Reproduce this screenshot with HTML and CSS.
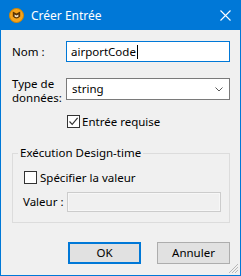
FILE: index.html
```html
<!DOCTYPE html>
<html lang="fr">
<head>
<meta charset="utf-8">
<link rel="stylesheet" href="styles.css">
</head>
<body>
<div class="win">
  <div class="titlebar">
    <svg class="appicon" width="15" height="15" viewBox="0 0 15 15">
      <circle cx="7.5" cy="7.5" r="7" fill="#f7a41c" stroke="#d38400" stroke-width="1"/>
      <path d="M3.8 3.6 L7.5 5.6 L11.2 3.6 L11.2 8.6 Q7.5 12.4 3.8 8.6 Z" fill="#5b3405"/>
      <path d="M5.6 6.6 L7.5 7.6 L9.4 6.6 L9.4 8.4 Q7.5 10 5.6 8.4 Z" fill="#f3e3c8"/>
    </svg>
    <span class="title">Créer Entrée</span>
    <svg class="close" width="11" height="11" viewBox="0 0 11 11">
      <path d="M0.5 0.5 L10.5 10.5 M10.5 0.5 L0.5 10.5" stroke="#ffffff" stroke-width="1.1" fill="none"/>
    </svg>
  </div>
  <div class="content">
    <div class="row row-nom">
      <span class="lbl">Nom :</span>
      <div class="edit focused"><span>airportCode</span><span class="caret"></span></div>
    </div>
    <div class="row row-type">
      <span class="lbl lbl2">Type de<br>données:</span>
      <div class="combo">
        <span>string</span>
        <svg class="chev" width="8" height="5" viewBox="0 0 8 5"><path d="M0.5 0.5 L4 4 L7.5 0.5" stroke="#5a5a5a" stroke-width="1" fill="none"/></svg>
      </div>
    </div>
    <div class="check-row check-req">
      <span class="cb"><svg width="11" height="11" viewBox="0 0 11 11"><path d="M1.5 5.5 L4.2 8.3 L9.6 1.8" stroke="#333333" stroke-width="1.2" fill="none"/></svg></span>
      <span>Entrée requise</span>
    </div>
    <fieldset class="group">
      <legend>Exécution Design-time</legend>
      <div class="check-row check-spec">
        <span class="cb"></span>
        <span>Spécifier la valeur</span>
      </div>
      <div class="row row-val">
        <span class="lbl">Valeur :</span>
        <div class="edit disabled"></div>
      </div>
    </fieldset>
    <div class="buttons">
      <button class="btn default">OK</button>
      <button class="btn">Annuler</button>
    </div>
  </div>
  <svg class="grip" width="10" height="10" viewBox="0 0 10 10">
    <g fill="#b8b8b8">
      <rect x="8" y="0" width="1" height="1"/><rect x="7" y="1" width="1" height="1"/><rect x="6" y="2" width="1" height="1"/><rect x="5" y="3" width="1" height="1"/><rect x="4" y="4" width="1" height="1"/><rect x="3" y="5" width="1" height="1"/><rect x="2" y="6" width="1" height="1"/><rect x="1" y="7" width="1" height="1"/><rect x="0" y="8" width="1" height="1"/>
      <rect x="8" y="3" width="1" height="1"/><rect x="7" y="4" width="1" height="1"/><rect x="6" y="5" width="1" height="1"/><rect x="5" y="6" width="1" height="1"/><rect x="4" y="7" width="1" height="1"/><rect x="3" y="8" width="1" height="1"/>
      <rect x="8" y="6" width="1" height="1"/><rect x="7" y="7" width="1" height="1"/><rect x="6" y="8" width="1" height="1"/>
    </g>
  </svg>
</div>
</body>
</html>
```

FILE: styles.css
```css
* { box-sizing: border-box; }
html, body { margin: 0; padding: 0; background: #f0f0f0; }
body {
  font-family: "Segoe UI", "Noto Sans", "Liberation Sans", sans-serif;
  font-size: 11.5px;
  color: #000;
}
.win {
  position: relative;
  width: 241px;
  height: 276px;
  border: 1px solid #0078d7;
  background: #f0f0f0;
  overflow: hidden;
}
.titlebar {
  height: 29px;
  background: #0078d7;
  display: flex;
  align-items: center;
  padding: 0 9px 0 8px;
  color: #fff;
}
.appicon { flex: none; }
.title {
  margin-left: 7px;
  font-size: 12px;
  flex: 1;
  line-height: 16px;
}
.close { flex: none; }
.content {
  padding: 11px 10px 0 11px;
}
.row {
  display: grid;
  grid-template-columns: 54px 164px;
}
.row-nom { height: 21px; align-items: center; }
.row-type { height: 22px; margin-top: 16px; align-items: start; }
.lbl { line-height: 14px; white-space: nowrap; }
.lbl2 { line-height: 14px; margin-top: -1px; }
.edit {
  height: 21px;
  background: #fff;
  border: 1px solid #7a7a7a;
  display: flex;
  align-items: center;
  padding-left: 4px;
  line-height: 14px;
}
.edit.focused { border-color: #0078d7; }
.caret {
  display: inline-block;
  width: 1px;
  height: 14px;
  background: #000;
  margin-left: 1px;
}
.combo {
  height: 22px;
  background: #fff;
  border: 1px solid #7a7a7a;
  display: flex;
  align-items: center;
  justify-content: space-between;
  padding: 0 6px 0 5px;
  line-height: 14px;
}
.chev { margin-top: 1px; }
.check-row {
  display: flex;
  align-items: center;
  gap: 2px;
  height: 13px;
  line-height: 14px;
}
.check-req { margin: 15px 0 0 55px; }
.cb {
  width: 13px;
  height: 13px;
  flex: none;
  border: 1px solid #333;
  background: #fff;
  display: flex;
  align-items: center;
  justify-content: center;
}
.group {
  margin: 18px 0 0 0;
  padding: 0 0 10px 0;
  border: 1px solid #dcdcdc;
  min-width: 0;
}
.group legend {
  margin-left: 5px;
  padding: 0 2px;
  line-height: 14px;
}
.check-spec { margin: 11px 0 0 11px; gap: 3px; }
.row-val {
  margin: 8px 0 0 10px;
  grid-template-columns: 44px 154px;
  align-items: center;
  height: 20px;
}
.edit.disabled {
  height: 20px;
  background: #f0f0f0;
  border: 1px solid #cccccc;
  box-shadow: inset 0 0 0 1px #f7f7f7;
}
.buttons {
  margin-top: 19px;
  display: flex;
  justify-content: flex-end;
  gap: 16px;
}
.btn {
  width: 73px;
  height: 22px;
  background: #e1e1e1;
  border: 1px solid #adadad;
  font: inherit;
  color: #000;
  padding: 0;
  line-height: 14px;
}
.btn.default { border: 2px solid #0078d7; }
.grip {
  position: absolute;
  right: 1px;
  bottom: 1px;
}
```
